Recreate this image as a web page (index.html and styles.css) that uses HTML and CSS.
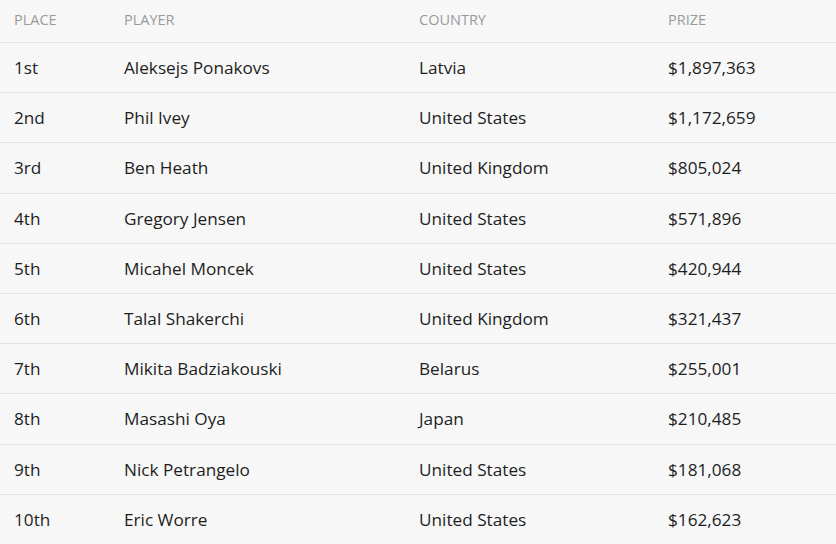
FILE: index.html
```html
<!DOCTYPE html>
<html>
<head>
<meta charset="utf-8">
<link rel="stylesheet" href="styles.css">
</head>
<body>
<div class="table">
  <div class="row head">
    <div>PLACE</div><div>PLAYER</div><div>COUNTRY</div><div>PRIZE</div>
  </div>
  <div class="row"><div>1st</div><div>Aleksejs Ponakovs</div><div>Latvia</div><div>$1,897,363</div></div>
  <div class="row"><div>2nd</div><div>Phil Ivey</div><div>United States</div><div>$1,172,659</div></div>
  <div class="row"><div>3rd</div><div>Ben Heath</div><div>United Kingdom</div><div>$805,024</div></div>
  <div class="row"><div>4th</div><div>Gregory Jensen</div><div>United States</div><div>$571,896</div></div>
  <div class="row"><div>5th</div><div>Micahel Moncek</div><div>United States</div><div>$420,944</div></div>
  <div class="row"><div>6th</div><div>Talal Shakerchi</div><div>United Kingdom</div><div>$321,437</div></div>
  <div class="row"><div>7th</div><div>Mikita Badziakouski</div><div>Belarus</div><div>$255,001</div></div>
  <div class="row"><div>8th</div><div>Masashi Oya</div><div>Japan</div><div>$210,485</div></div>
  <div class="row"><div>9th</div><div>Nick Petrangelo</div><div>United States</div><div>$181,068</div></div>
  <div class="row"><div>10th</div><div>Eric Worre</div><div>United States</div><div>$162,623</div></div>
</div>
</body>
</html>
```
FILE: styles.css
```css
html, body {
  margin: 0;
  padding: 0;
  background: #f7f7f7;
}
body {
  font-family: "Open Sans", "Liberation Sans", sans-serif;
  color: #1e1e1e;
  overflow: hidden;
}
.table {
  display: flex;
  flex-direction: column;
}
.row {
  display: grid;
  grid-template-columns: 110px 295px 249px 1fr;
  padding-left: 14px;
  align-items: center;
  height: 50.2px;
  box-sizing: border-box;
  border-top: 1px solid #e3e3e3;
  font-size: 17.2px;
}
.row.head {
  height: 42px;
  padding-bottom: 4px;
  border-top: none;
  font-size: 14.5px;
  color: #9a9a9a;
}
```
